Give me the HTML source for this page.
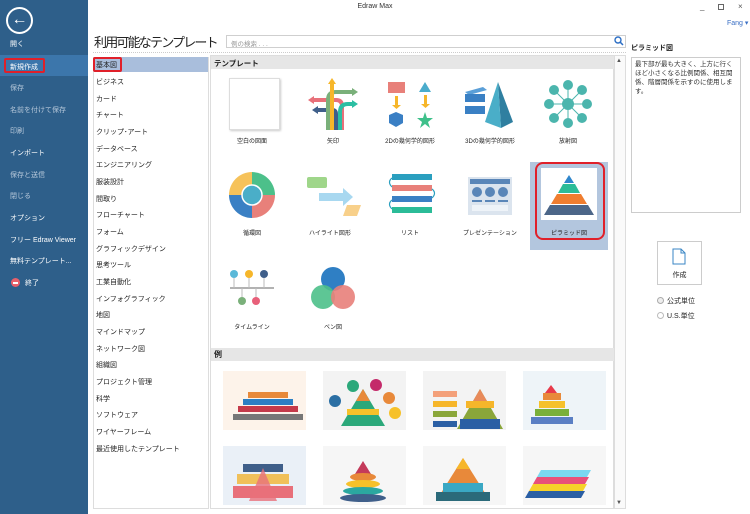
<!DOCTYPE html>
<html><head><meta charset="utf-8"><style>
*{margin:0;padding:0;box-sizing:border-box}
body{width:750px;height:514px;overflow:hidden;background:#fff;font-family:"Liberation Sans","Noto Sans CJK JP",sans-serif;font-size:7px;color:#222;position:relative}
.a{position:absolute}
.side{left:0;top:0;width:88px;height:514px;background:#2e5f8a}
.si{position:absolute;left:10px;color:#fff;font-size:7px;white-space:nowrap}
.si.dim{color:#b7c8da}
.cat{position:absolute;left:96px;font-size:7px;white-space:nowrap;color:#222}
.lbl{position:absolute;width:80px;text-align:center;font-size:6px;color:#222;white-space:nowrap}
.th{position:absolute;width:83px;height:59px}
</style></head><body>
<div class="a side"></div>
<div class="a" style="left:6px;top:7px;width:27px;height:27px;border:2px solid #fff;border-radius:50%;color:#fff;font-size:16px;line-height:22px;text-align:center">&#8592;</div>
<div class="a" style="left:0;top:55px;width:88px;height:21px;background:#3c76ab"></div>
<div class="a" style="left:4px;top:58px;width:41px;height:15px;border:2px solid #e0202a;border-radius:2px"></div>
<div class="si" style="top:39px">開く</div>
<div class="si" style="top:62px">新規作成</div>
<div class="si dim" style="top:83px">保存</div>
<div class="si dim" style="top:105px">名前を付けて保存</div>
<div class="si dim" style="top:126px">印刷</div>
<div class="si" style="top:148px">インポート</div>
<div class="si dim" style="top:170px">保存と送信</div>
<div class="si dim" style="top:191px">閉じる</div>
<div class="si" style="top:213px">オプション</div>
<div class="si" style="top:235px">フリー Edraw Viewer</div>
<div class="si" style="top:256px">無料テンプレート...</div>
<div class="a" style="left:11px;top:278px;width:9px;height:9px;border-radius:50%;background:#e8606a"><div style="margin:3.5px 2px;height:2px;background:#fff"></div></div>
<div class="si" style="top:278px;left:25px">終了</div>

<div class="a" style="left:0;top:3px;width:750px;text-align:center;font-size:7px;color:#333">Edraw Max</div>
<div class="a" style="left:700px;top:2px;font-size:8px;color:#555">_</div>
<div class="a" style="left:718px;top:4px;width:6px;height:6px;border:1px solid #666"></div>
<div class="a" style="left:738px;top:2px;font-size:8px;color:#555">×</div>
<div class="a" style="left:727px;top:19px;font-size:7px;color:#3a6fc4">Fang ▾</div>

<div class="a" style="left:94px;top:32px;font-size:13px;letter-spacing:-1.8px;color:#222;white-space:nowrap">利用可能なテンプレート</div>
<div class="a" style="left:226px;top:35px;width:400px;height:13px;border:1px solid #cfcfcf;font-size:6.5px;color:#999;padding:2px 4px">例の検索 . . .</div>
<svg class="a" style="left:614px;top:36px" width="10" height="10"><circle cx="4" cy="4" r="3" fill="none" stroke="#2c6ec4" stroke-width="1.4"/><line x1="6.2" y1="6.2" x2="9" y2="9" stroke="#2c6ec4" stroke-width="1.5"/></svg>
<div class="a" style="left:93px;top:52px;width:533px;border-top:1px dotted #ccc"></div>

<div class="a" style="left:93px;top:57px;width:116px;height:452px;border:1px solid #ddd"></div>
<div class="a" style="left:94px;top:57px;width:114px;height:15px;background:#a9bedc"></div>
<div class="a" style="left:93px;top:57px;width:29px;height:15px;border:2px solid #e0202a;border-radius:2px"></div>
<div class="cat" style="top:60px">基本図</div>
<div class="cat" style="top:77px">ビジネス</div>
<div class="cat" style="top:94px">カード</div>
<div class="cat" style="top:110px">チャート</div>
<div class="cat" style="top:127px">クリップ･アート</div>
<div class="cat" style="top:144px">データベース</div>
<div class="cat" style="top:160px">エンジニアリング</div>
<div class="cat" style="top:177px">服装設計</div>
<div class="cat" style="top:194px">間取り</div>
<div class="cat" style="top:210px">フローチャート</div>
<div class="cat" style="top:227px">フォーム</div>
<div class="cat" style="top:244px">グラフィックデザイン</div>
<div class="cat" style="top:260px">思考ツール</div>
<div class="cat" style="top:277px">工業自動化</div>
<div class="cat" style="top:294px">インフォグラフィック</div>
<div class="cat" style="top:310px">地図</div>
<div class="cat" style="top:327px">マインドマップ</div>
<div class="cat" style="top:344px">ネットワーク図</div>
<div class="cat" style="top:360px">組織図</div>
<div class="cat" style="top:377px">プロジェクト管理</div>
<div class="cat" style="top:394px">科学</div>
<div class="cat" style="top:410px">ソフトウェア</div>
<div class="cat" style="top:427px">ワイヤーフレーム</div>
<div class="cat" style="top:444px">最近使用したテンプレート</div>

<div class="a" style="left:210px;top:55px;width:404px;height:454px;border:1px solid #ddd"></div>
<div class="a" style="left:211px;top:56px;width:403px;height:13px;background:#e6e6e6;font-weight:bold;font-size:7.5px;padding:2px 3px">テンプレート</div>
<div class="a" style="left:614px;top:55px;width:12px;height:454px;border:1px solid #ddd;background:#fafafa"></div>
<div class="a" style="left:616px;top:58px;font-size:6px;color:#555">▲</div>
<div class="a" style="left:616px;top:500px;font-size:6px;color:#555">▼</div>

<!-- row1 -->
<div class="a" style="left:229px;top:78px;width:51px;height:52px;border:1px solid #ddd;box-shadow:1px 1px 2px #ccc"></div>
<svg class="a" style="left:306px;top:78px" width="52" height="52">
<path d="M6 22h24q6 0 6 6v24" fill="none" stroke="#e8707a" stroke-width="4"/><path d="M2 22l6-4v8z" fill="#e8707a"/>
<path d="M10 32h16q4 0 4 4v16" fill="none" stroke="#3f5f8a" stroke-width="4"/><path d="M6 32l6-4v8z" fill="#3f5f8a"/>
<path d="M48 14h-18q-8 0 -8 8v30" fill="none" stroke="#7ab07a" stroke-width="4"/><path d="M52 14l-6-4v8z" fill="#7ab07a"/>
<path d="M26 4v48" stroke="#f6b62a" stroke-width="4"/><path d="M26 0l-4 6h8z" fill="#f6b62a"/>
<path d="M48 26h-6q-8 0-8 8v18" fill="none" stroke="#2bbfa3" stroke-width="4"/><path d="M52 26l-6-4v8z" fill="#2bbfa3"/>
</svg>
<svg class="a" style="left:386px;top:82px" width="50" height="48">
<rect x="2" y="0" width="17" height="11" fill="#e8807a"/><rect x="9" y="14" width="3" height="9" fill="#f6b62a"/><path d="M6 23h9l-4.5 4z" fill="#f6b62a"/>
<polygon points="10,30 17,33 17,41 10,45 3,41 3,33" fill="#3a7fc4"/>
<polygon points="39,0 45,10 33,10" fill="#4aaccc"/><rect x="38" y="13" width="3" height="9" fill="#f6b62a"/><path d="M35 22h9l-4.5 4z" fill="#f6b62a"/>
<polygon points="39,30 41,36 47,36 42,40 44,46 39,42 34,46 36,40 31,36 37,36" fill="#3ec08a"/>
</svg>
<svg class="a" style="left:465px;top:82px" width="50" height="46">
<polygon points="0,10 18,5 22,8 4,13" fill="#5a9fd8"/><rect x="0" y="12" width="20" height="8" fill="#3a80c4"/>
<rect x="0" y="24" width="20" height="8" fill="#3a80c4"/>
<polygon points="33,0 48,40 36,46" fill="#2f7fa0"/><polygon points="33,0 36,46 20,40" fill="#4aaec8"/>
</svg>
<svg class="a" style="left:544px;top:80px" width="48" height="48" fill="#4bb5ad">
<g stroke="#4bb5ad" stroke-width="1"><line x1="24" y1="24" x2="24" y2="5"/><line x1="24" y1="24" x2="24" y2="43"/><line x1="24" y1="24" x2="5" y2="24"/><line x1="24" y1="24" x2="43" y2="24"/><line x1="24" y1="24" x2="10" y2="10"/><line x1="24" y1="24" x2="38" y2="38"/><line x1="24" y1="24" x2="38" y2="10"/><line x1="24" y1="24" x2="10" y2="38"/></g>
<circle cx="24" cy="24" r="6"/><circle cx="24" cy="5" r="5"/><circle cx="24" cy="43" r="5"/><circle cx="5" cy="24" r="5"/><circle cx="43" cy="24" r="5"/><circle cx="10" cy="10" r="5"/><circle cx="38" cy="38" r="5"/><circle cx="38" cy="10" r="5"/><circle cx="10" cy="38" r="5"/>
</svg>
<div class="lbl" style="left:212px;top:136px">空白の図面</div>
<div class="lbl" style="left:293px;top:136px">矢印</div>
<div class="lbl" style="left:370px;top:136px">2Dの幾何学的図形</div>
<div class="lbl" style="left:450px;top:136px">3Dの幾何学的図形</div>
<div class="lbl" style="left:528px;top:136px">放射図</div>

<!-- row2 -->
<div class="a" style="left:530px;top:162px;width:78px;height:88px;background:#b3c6de"></div>
<div class="a" style="left:541px;top:168px;width:56px;height:52px;background:#fff"></div>
<div class="a" style="left:535px;top:162px;width:70px;height:78px;border:2px solid #e0202a;border-radius:8px"></div>
<svg class="a" style="left:544px;top:175px" width="50" height="42">
<polygon points="25,0 30,8 20,8" fill="#2f86cc"/><polygon points="19,9 31,9 36,18 14,18" fill="#2bbc98"/>
<polygon points="13,19 37,19 43,29 7,29" fill="#ef7d2f"/><polygon points="6,30 44,30 50,40 0,40" fill="#4c6688"/>
</svg>
<svg class="a" style="left:229px;top:172px" width="46" height="46">
<path d="M23 0A23 23 0 0 1 46 23H23z" fill="#4cc08a"/><path d="M46 23A23 23 0 0 1 23 46V23z" fill="#e8807a"/>
<path d="M23 46A23 23 0 0 1 0 23H23z" fill="#3a80c4"/><path d="M0 23A23 23 0 0 1 23 0V23z" fill="#f6c25a"/>
<circle cx="23" cy="23" r="10" fill="#4aaec8" stroke="#fff" stroke-width="1.5"/></svg>
<svg class="a" style="left:307px;top:177px" width="54" height="40">
<rect x="0" y="0" width="20" height="11" rx="2" fill="#9fd68a"/><path d="M12 16h24v-5l10 9-10 9v-5h-24z" fill="#a8d8f0"/><polygon points="40,28 54,28 50,39 36,39" fill="#f8d08a"/></svg>
<svg class="a" style="left:386px;top:174px" width="52" height="42">
<rect x="6" y="0" width="40" height="6" fill="#2a9fbf"/><rect x="6" y="11" width="40" height="6" fill="#e8807a"/><rect x="6" y="22" width="40" height="6" fill="#3a80c4"/><rect x="6" y="33" width="40" height="6" fill="#2bbc98"/>
<path d="M6 4q-5 4 0 9M46 15q5 4 0 9M6 26q-5 4 0 9" fill="none" stroke="#2a9fbf" stroke-width="1.2"/></svg>
<svg class="a" style="left:468px;top:177px" width="44" height="40">
<rect x="0" y="0" width="44" height="38" fill="#dbe4ee"/><rect x="2" y="2" width="40" height="5" fill="#5a86b8"/>
<circle cx="9" cy="15" r="5" fill="#5a86b8"/><circle cx="22" cy="15" r="5" fill="#5a86b8"/><circle cx="35" cy="15" r="5" fill="#5a86b8"/>
<rect x="4" y="23" width="10" height="2" fill="#5a86b8"/><rect x="17" y="23" width="10" height="2" fill="#5a86b8"/><rect x="30" y="23" width="10" height="2" fill="#5a86b8"/>
<rect x="4" y="28" width="36" height="6" fill="#eef3f8"/></svg>
<div class="lbl" style="left:212px;top:228px">循環図</div>
<div class="lbl" style="left:290px;top:228px">ハイライト図形</div>
<div class="lbl" style="left:370px;top:228px">リスト</div>
<div class="lbl" style="left:450px;top:228px">プレゼンテーション</div>
<div class="lbl" style="left:529px;top:228px">ピラミッド図</div>

<!-- row3 -->
<svg class="a" style="left:230px;top:270px" width="46" height="38">
<line x1="0" y1="18" x2="44" y2="18" stroke="#999" stroke-width="1.5"/>
<g stroke="#bbb" stroke-width="1"><line x1="4" y1="5" x2="4" y2="18"/><line x1="19" y1="5" x2="19" y2="18"/><line x1="34" y1="5" x2="34" y2="18"/><line x1="12" y1="18" x2="12" y2="30"/><line x1="26" y1="18" x2="26" y2="30"/></g>
<circle cx="4" cy="4" r="4" fill="#5ab8d8"/><circle cx="19" cy="4" r="4" fill="#f6b62a"/><circle cx="34" cy="4" r="4" fill="#3f5f8a"/><circle cx="12" cy="31" r="4" fill="#7ab07a"/><circle cx="26" cy="31" r="4" fill="#e8607a"/></svg>
<svg class="a" style="left:309px;top:264px" width="48" height="48">
<circle cx="24" cy="15" r="12" fill="#2f7fc4"/><circle cx="14" cy="33" r="12" fill="#4cc08a" opacity=".9"/><circle cx="34" cy="33" r="12" fill="#e8807a" opacity=".9"/></svg>
<div class="lbl" style="left:212px;top:322px">タイムライン</div>
<div class="lbl" style="left:293px;top:322px">ベン図</div>

<div class="a" style="left:211px;top:348px;width:403px;height:13px;background:#e6e6e6;font-weight:bold;font-size:8px;padding:1px 3px">例</div>
<div class="th" style="left:223px;top:371px;background:#fdf3ea"></div>
<div class="th" style="left:323px;top:371px;background:#f3f3f3"></div>
<div class="th" style="left:423px;top:371px;background:#f3f3f3"></div>
<div class="th" style="left:523px;top:371px;background:#eef4f8"></div>
<div class="th" style="left:223px;top:446px;background:#eaf0f7"></div>
<div class="th" style="left:323px;top:446px;background:#f6f6f6"></div>
<div class="th" style="left:423px;top:446px;background:#f6f6f6"></div>
<div class="th" style="left:523px;top:446px;background:#f6f6f6"></div>
<svg class="a" style="left:223px;top:371px" width="390" height="134">
<g><rect x="25" y="21" width="40" height="6" fill="#e8893a"/><rect x="20" y="28" width="50" height="6" fill="#2b7fc4"/><rect x="15" y="35" width="60" height="6" fill="#c43a4a"/><rect x="10" y="43" width="70" height="6" fill="#777"/></g>
<g transform="translate(100,0)"><polygon points="40,18 62,55 18,55" fill="#2ba87a"/><polygon points="40,18 47,30 33,30" fill="#e8893a"/><rect x="24" y="38" width="32" height="6" fill="#f6c12a"/><circle cx="12" cy="30" r="6" fill="#2b6fa4"/><circle cx="30" cy="15" r="6" fill="#2ba87a"/><circle cx="53" cy="14" r="6" fill="#c42a6a"/><circle cx="66" cy="27" r="6" fill="#e8893a"/><circle cx="72" cy="42" r="6" fill="#f6c12a"/></g>
<g transform="translate(200,0)"><polygon points="57,18 80,58 34,58" fill="#8aa63a"/><polygon points="57,18 64,30 50,30" fill="#e88a5a"/><rect x="43" y="30" width="28" height="7" fill="#f6b62a"/><rect x="37" y="48" width="40" height="10" fill="#2b5fa4"/><rect x="10" y="20" width="24" height="6" fill="#f3a07a"/><rect x="10" y="30" width="24" height="6" fill="#f6b62a"/><rect x="10" y="40" width="24" height="6" fill="#8aa63a"/><rect x="10" y="50" width="24" height="6" fill="#2b5fa4"/></g>
<g transform="translate(300,0)"><polygon points="28,14 34,22 22,22" fill="#e83a4a"/><rect x="20" y="22" width="18" height="7" fill="#e8893a"/><rect x="16" y="30" width="26" height="7" fill="#f6c12a"/><rect x="12" y="38" width="34" height="7" fill="#7ab03a"/><rect x="8" y="46" width="42" height="7" fill="#5a7fc4"/></g>
<g transform="translate(0,75)"><rect x="20" y="18" width="40" height="8" fill="#3f5f8a"/><rect x="14" y="28" width="52" height="10" fill="#f0c05a"/><rect x="10" y="40" width="60" height="12" fill="#e8707a"/><polygon points="40,22 54,55 26,55" fill="#e8707a" opacity=".8"/></g>
<g transform="translate(100,75)"><polygon points="40,15 48,28 32,28" fill="#c43a5a"/><ellipse cx="40" cy="31" rx="13" ry="4" fill="#e8893a"/><ellipse cx="40" cy="38" rx="17" ry="4" fill="#f6c12a"/><ellipse cx="40" cy="45" rx="20" ry="4" fill="#2ba8a0"/><ellipse cx="40" cy="52" rx="23" ry="4" fill="#3f5f8a"/></g>
<g transform="translate(200,75)"><polygon points="40,12 67,55 13,55" fill="#e8893a"/><polygon points="40,12 47,23 33,23" fill="#f6b62a"/><rect x="20" y="37" width="40" height="9" fill="#3aa8c4"/><rect x="13" y="46" width="54" height="9" fill="#2b6a7a"/></g>
<g transform="translate(300,75)"><polygon points="18,24 68,24 64,31 14,31" fill="#7ad8f0"/><polygon points="14,31 66,31 62,38 10,38" fill="#e8507a"/><polygon points="10,38 64,38 60,45 6,45" fill="#f6d12a"/><polygon points="6,45 62,45 58,52 2,52" fill="#2b5fa4"/></g>
</svg>

<div class="a" style="left:631px;top:43px;font-size:7px;font-weight:bold">ピラミッド図</div>
<div class="a" style="left:631px;top:57px;width:110px;height:156px;border:1px solid #ccc;font-size:6.5px;line-height:9px;padding:2px 3px;color:#333">最下部が最も大きく、上方に行くほど小さくなる比例関係、相互関係、階層関係を示すのに使用します。</div>
<div class="a" style="left:657px;top:241px;width:45px;height:44px;border:1px solid #ccc;background:#fff"></div>
<svg class="a" style="left:672px;top:248px" width="14" height="17"><path d="M1 1h8l4 4v11h-12z M9 1v4h4" fill="none" stroke="#3a86c4" stroke-width="1"/></svg>
<div class="a" style="left:657px;top:270px;width:45px;text-align:center;font-size:7px">作成</div>
<div class="a" style="left:657px;top:297px;width:7px;height:7px;border:1px solid #aaa;border-radius:50%;background:#eee"></div>
<div class="a" style="left:667px;top:296px;font-size:7px">公式単位</div>
<div class="a" style="left:657px;top:312px;width:7px;height:7px;border:1px solid #bbb;border-radius:50%"></div>
<div class="a" style="left:667px;top:311px;font-size:7px">U.S.単位</div>
</body></html>
